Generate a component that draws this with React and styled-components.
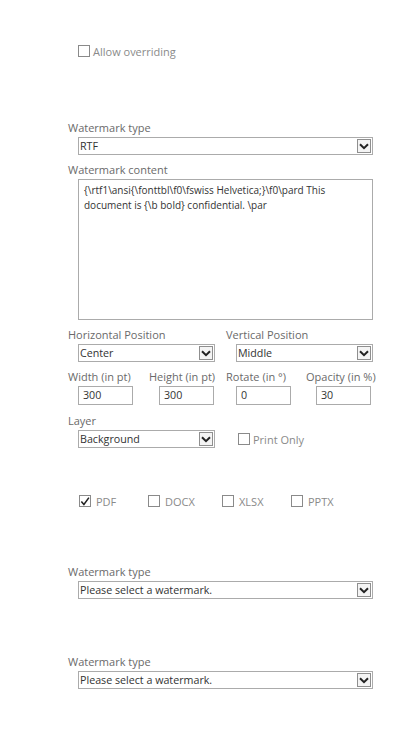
import { createGlobalStyle, styled } from 'styled-components';

const GlobalStyle = createGlobalStyle`
  html, body {
    margin: 0;
    padding: 0;
    background: #fff;
  }
  body {
    font-family: 'Open Sans', 'Noto Sans', sans-serif;
  }
`;

function CheckBox({ checked, label, $gap }) {
  return (
    <CHECK_ST $gap={$gap}>
      <BOX_ST>
        {checked && (
          <svg width="11" height="11" viewBox="0 0 11 11">
            <path d="M1.5 5.5 L4.3 8.8 L9.8 1.2" fill="none" stroke="#222" strokeWidth="1.7" />
          </svg>
        )}
      </BOX_ST>
      <CHECKTEXT_ST>{label}</CHECKTEXT_ST>
    </CHECK_ST>
  );
}

function Select({ value, $width }) {
  return (
    <SELECT_ST $width={$width}>
      <span>{value}</span>
      <ARROW_ST>
        <svg width="10" height="7" viewBox="0 0 10 7">
          <path d="M1 1.2 L5 5.2 L9 1.2" fill="none" stroke="#222" strokeWidth="2" />
        </svg>
      </ARROW_ST>
    </SELECT_ST>
  );
}

function Field({ label, children, $top }) {
  return (
    <FIELD_ST $top={$top}>
      <LABEL_ST>{label}</LABEL_ST>
      <CONTROL_ST>{children}</CONTROL_ST>
    </FIELD_ST>
  );
}

export default function App() {
  return (
    <PAGE_ST>
      <GlobalStyle />
      <OVERRIDE_ST>
        <CheckBox label="Allow overriding" />
      </OVERRIDE_ST>

      <Field label="Watermark type" $top={63}>
        <Select value="RTF" />
      </Field>

      <Field label="Watermark content" $top={8}>
        <TEXTAREA_ST>
          {'{\\rtf1\\ansi{\\fonttbl\\f0\\fswiss Helvetica;}\\f0\\pard This document is {\\b bold} confidential. \\par'}
        </TEXTAREA_ST>
      </Field>

      <ROW_ST $cols="158px 158px" $top={8}>
        <Field label="Horizontal Position">
          <Select value="Center" $width={137} />
        </Field>
        <Field label="Vertical Position">
          <Select value="Middle" $width={137} />
        </Field>
      </ROW_ST>

      <ROW_ST $cols="81px 77px 80px 80px" $top={8}>
        <Field label="Width (in pt)">
          <INPUT_ST>300</INPUT_ST>
        </Field>
        <Field label="Height (in pt)">
          <INPUT_ST>300</INPUT_ST>
        </Field>
        <Field label="Rotate (in °)">
          <INPUT_ST>0</INPUT_ST>
        </Field>
        <Field label="Opacity (in %)">
          <INPUT_ST>30</INPUT_ST>
        </Field>
      </ROW_ST>

      <Field label="Layer" $top={9}>
        <LAYERROW_ST>
          <Select value="Background" $width={137} />
          <CheckBox label="Print Only" />
        </LAYERROW_ST>
      </Field>

      <FORMATS_ST>
        <CheckBox checked label="PDF" $gap={5} />
        <CheckBox label="DOCX" $gap={5} />
        <CheckBox label="XLSX" $gap={5} />
        <CheckBox label="PPTX" $gap={5} />
      </FORMATS_ST>

      <Field label="Watermark type" $top={57}>
        <Select value="Please select a watermark." />
      </Field>

      <Field label="Watermark type" $top={56}>
        <Select value="Please select a watermark." />
      </Field>
    </PAGE_ST>
  );
}

const PAGE_ST = styled.div`
  width: 404px;
  min-height: 733px;
  box-sizing: border-box;
  padding: 44px 0 0 68px;
`;

const OVERRIDE_ST = styled.div`
  padding-left: 10px;
`;

const CHECK_ST = styled.label`
  display: flex;
  align-items: center;
  gap: ${(p) => p.$gap || 3}px;
  height: 14px;
`;

const BOX_ST = styled.span`
  width: 10px;
  height: 10px;
  border: 1px solid #8a8a8a;
  background: #fff;
  display: flex;
  align-items: center;
  justify-content: center;
`;

const CHECKTEXT_ST = styled.span`
  font-size: 11px;
  color: #8a8a8a;
`;

const FIELD_ST = styled.div`
  margin-top: ${(p) => p.$top || 0}px;
`;

const LABEL_ST = styled.div`
  font-size: 11px;
  line-height: 14px;
  height: 14px;
  color: #6a6a6a;
  white-space: nowrap;
`;

const CONTROL_ST = styled.div`
  margin-top: 2px;
  padding-left: 10px;
`;

const SELECT_ST = styled.div`
  width: ${(p) => p.$width || 295}px;
  height: 18px;
  box-sizing: border-box;
  border: 1px solid #ababab;
  display: flex;
  align-items: center;
  justify-content: space-between;
  padding-left: 1px;
  font-size: 10.7px;
  color: #333;
  background: #fff;
`;

const ARROW_ST = styled.span`
  width: 14px;
  height: 14px;
  margin-right: 1px;
  box-sizing: border-box;
  border: 1px solid #8f8f8f;
  background: #f4f4f4;
  display: flex;
  align-items: center;
  justify-content: center;
`;

const TEXTAREA_ST = styled.div`
  width: 295px;
  height: 141px;
  box-sizing: border-box;
  border: 1px solid #ababab;
  padding: 3px 20px 0 5px;
  font-size: 10px;
  line-height: 15px;
  color: #333;
`;

const ROW_ST = styled.div`
  display: grid;
  grid-template-columns: ${(p) => p.$cols};
  margin-top: ${(p) => p.$top}px;
`;

const INPUT_ST = styled.div`
  width: 55px;
  height: 19px;
  box-sizing: border-box;
  border: 1px solid #ababab;
  padding-left: 4px;
  font-size: 10.7px;
  line-height: 17px;
  color: #333;
`;

const LAYERROW_ST = styled.div`
  display: flex;
  align-items: center;
  gap: 23px;
`;

const FORMATS_ST = styled.div`
  display: grid;
  grid-template-columns: 69px 74px 69px auto;
  align-items: center;
  margin-top: 46px;
  padding-left: 11px;
`;
